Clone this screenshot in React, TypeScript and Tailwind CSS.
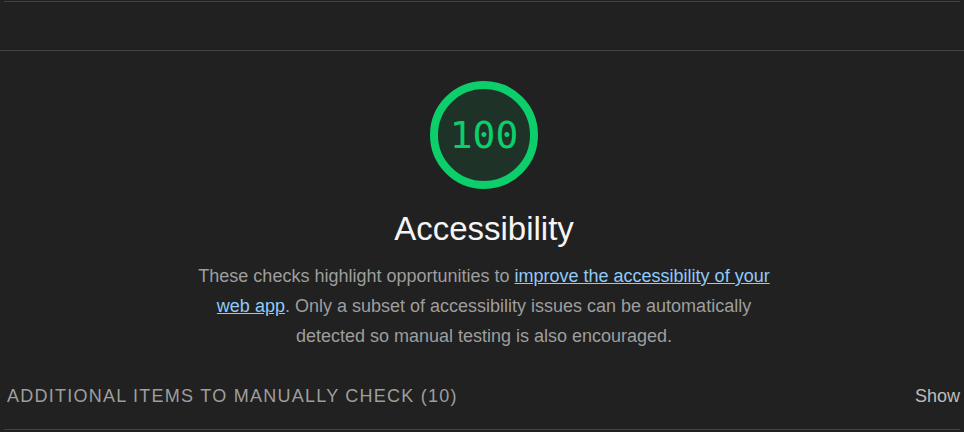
import React from 'react';

const Gauge: React.FC<{ score: number }> = ({ score }) => (
  <div className="relative w-[112px] h-[112px]">
    <svg viewBox="0 0 112 112" className="w-full h-full">
      <circle cx="56" cy="56" r="50" fill="#1f3228" stroke="#0cce6b" strokeWidth="8" />
    </svg>
    <div className="absolute inset-0 flex items-center justify-center text-[38px] text-[#0cce6b] font-['DejaVu_Sans_Mono',monospace]">
      {score}
    </div>
  </div>
);

export default function App() {
  return (
    <div className="w-[964px] h-[432px] bg-[#212121] font-['Liberation_Sans',Arial,sans-serif] overflow-hidden">
      <div className="h-[50px] border-b border-[#424242]">
        <div className="mx-1 mt-px h-px bg-[#424242]" />
      </div>

      <div className="flex flex-col items-center pt-[28px] pl-[4px]">
        <Gauge score={100} />
        <h1 className="mt-[18px] text-[33px] leading-[40px] text-[#f5f5f5]">Accessibility</h1>
        <p className="mt-[12px] w-[590px] text-center text-[18px] leading-[30px] text-[#9e9e9e]">
          These checks highlight opportunities to{' '}
          <a href="#" className="text-[#90caf9] underline">improve the accessibility of your web app</a>. Only a subset
          of accessibility issues can be automatically detected so manual testing is also encouraged.
        </p>
      </div>

      <div className="mt-[21px] mx-1 border-b border-[#424242] pt-[12px] pb-[21px] flex items-center justify-between leading-[24px]">
        <span className="pl-[3px] text-[18px] tracking-[1.25px] text-[#9e9e9e]">ADDITIONAL ITEMS TO MANUALLY CHECK (10)</span>
        <span className="text-[18px] text-[#bdbdbd]">Show</span>
      </div>
    </div>
  );
}
